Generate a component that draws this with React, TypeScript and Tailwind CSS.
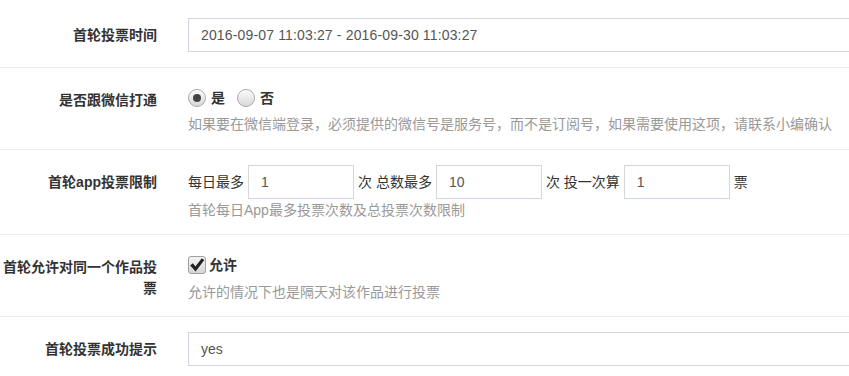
import React from 'react';

const Label: React.FC<{ children: React.ReactNode; className?: string }> = ({ children, className = '' }) => (
  <div className={`w-[172px] shrink-0 pr-[15px] text-right font-bold leading-[20px] ${className}`}>{children}</div>
);

const Radio: React.FC<{ checked?: boolean }> = ({ checked }) => (
  <span className="flex h-[18px] w-[18px] items-center justify-center rounded-full border border-[#a9a9a9] bg-gradient-to-b from-[#fafafa] to-[#d9d9d9] shadow-[inset_0_1px_1px_rgba(255,255,255,0.9)]">
    {checked && <span className="h-[8px] w-[8px] rounded-full bg-[#444]" />}
  </span>
);

const SmallInput: React.FC<{ value: string }> = ({ value }) => (
  <div className="flex h-[34px] w-[106px] items-center border border-[#d2d6de] pl-[12px] text-[#555]">{value}</div>
);

export default function App() {
  return (
    <div className="w-[849px] h-[376px] overflow-hidden bg-white font-['Liberation_Sans','Noto_Sans_CJK_SC',sans-serif] text-[14px] text-[#333]">
      {/* 首轮投票时间 */}
      <div className="flex border-b border-[#eeeeee] pt-[18px] pb-[15px]">
        <Label className="pt-[7px]">首轮投票时间</Label>
        <div className="min-w-0 flex-1 pl-[16px]">
          <div className="flex h-[34px] w-[700px] items-center border border-[#d2d6de] pl-[12px] text-[#555] tracking-[0.15px]">
            2016-09-07 11:03:27 - 2016-09-30 11:03:27
          </div>
        </div>
      </div>

      {/* 是否跟微信打通 */}
      <div className="flex border-b border-[#eeeeee] pb-[15px]">
        <Label className="pt-[22px]">是否跟微信打通</Label>
        <div className="min-w-0 flex-1 pl-[16px] pt-[20px]">
          <div className="flex h-[20px] items-center font-bold">
            <Radio checked />
            <span className="ml-[5px]">是</span>
            <span className="ml-[12px]">
              <Radio />
            </span>
            <span className="ml-[5px]">否</span>
          </div>
          <div className="mt-[6px] leading-[20px] whitespace-nowrap text-[#999]">
            如果要在微信端登录，必须提供的微信号是服务号，而不是订阅号，如果需要使用这项，请联系小编确认
          </div>
        </div>
      </div>

      {/* 首轮app投票限制 */}
      <div className="flex border-b border-[#eeeeee] pt-[15px] pb-[14px]">
        <Label className="pt-[7px]">首轮app投票限制</Label>
        <div className="min-w-0 flex-1 pl-[16px]">
          <div className="flex items-center gap-[4px] whitespace-nowrap">
            <span>每日最多</span>
            <SmallInput value="1" />
            <span>次 总数最多</span>
            <SmallInput value="10" />
            <span>次 投一次算</span>
            <SmallInput value="1" />
            <span>票</span>
          </div>
          <div className="mt-[1px] leading-[20px] text-[#999]">首轮每日App最多投票次数及总投票次数限制</div>
        </div>
      </div>

      {/* 首轮允许对同一个作品投票 */}
      <div className="flex border-b border-[#eeeeee] pb-[14px]">
        <Label className="pt-[22px] leading-[21px]">首轮允许对同一个作品投票</Label>
        <div className="min-w-0 flex-1 pl-[16px] pt-[20px]">
          <div className="flex h-[20px] items-center font-bold">
            <span className="flex h-[18px] w-[18px] items-center justify-center rounded-[3px] border border-[#a0a0a0] bg-gradient-to-b from-[#f4f4f4] to-[#d6d6d6]">
              <svg width="16" height="16" viewBox="0 0 14 14">
                <path d="M1 7.4 L3.4 5.5 L5.6 8.3 L11.2 1 L13.4 2.7 L5.8 12.6 Z" fill="#222" />
              </svg>
            </span>
            <span className="ml-[3px]">允许</span>
          </div>
          <div className="mt-[7px] leading-[20px] text-[#999]">允许的情况下也是隔天对该作品进行投票</div>
        </div>
      </div>

      {/* 首轮投票成功提示 */}
      <div className="flex pt-[15px] pb-[15px]">
        <Label className="pt-[7px]">首轮投票成功提示</Label>
        <div className="min-w-0 flex-1 pl-[16px]">
          <div className="flex h-[34px] w-[700px] items-center border border-[#d2d6de] pl-[12px] text-[#555]">yes</div>
        </div>
      </div>
    </div>
  );
}
